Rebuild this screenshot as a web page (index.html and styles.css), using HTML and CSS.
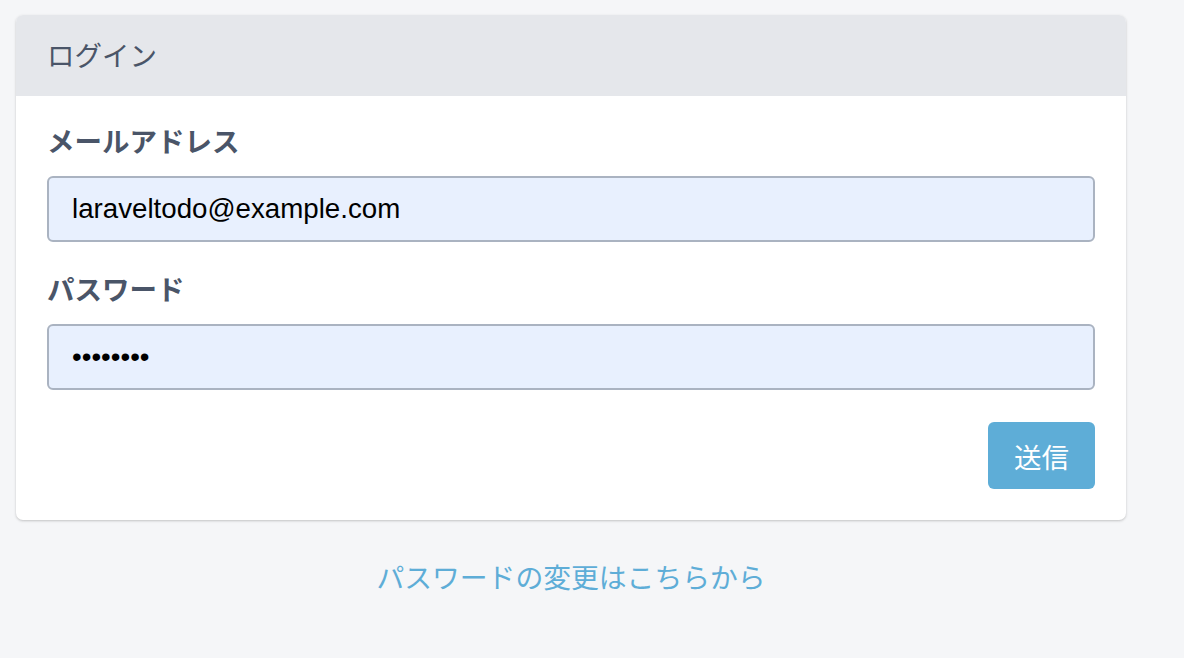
FILE: index.html
```html
<!DOCTYPE html>
<html lang="ja">
<head>
<meta charset="utf-8">
<title>ログイン</title>
<link rel="stylesheet" href="styles.css">
</head>
<body>
<main class="page">
  <section class="card">
    <header class="card-header">ログイン</header>
    <form class="card-body">
      <div class="field field-email">
        <label class="label" for="email">メールアドレス</label>
        <input class="input" id="email" type="text" value="laraveltodo@example.com">
      </div>
      <div class="field">
        <label class="label" for="password">パスワード</label>
        <input class="input" id="password" type="password" value="password">
      </div>
      <div class="actions">
        <button class="btn" type="button">送信</button>
      </div>
    </form>
  </section>
  <div class="link-row">
    <a class="link" href="#">パスワードの変更はこちらから</a>
  </div>
</main>
</body>
</html>
```

FILE: styles.css
```css
html, body {
  margin: 0;
  padding: 0;
}
body {
  background: #f5f6f8;
  font-family: "Liberation Sans", "Noto Sans CJK JP", sans-serif;
  color: #4a5568;
}
.page {
  padding: 15px 0 0 16px;
  width: 1110px;
}
.card {
  background: #ffffff;
  border-radius: 7px;
  box-shadow: 0 1px 3px rgba(0, 0, 0, 0.16), 0 1px 2px rgba(0, 0, 0, 0.06);
  overflow: hidden;
}
.card-header {
  box-sizing: border-box;
  background: #e5e7eb;
  height: 81px;
  display: flex;
  align-items: center;
  padding: 0 0 4px 31px;
  font-size: 27.5px;
  color: #4a5568;
}
.card-body {
  padding: 28px 31px 31px;
  margin: 0;
}
.field {
  display: flex;
  flex-direction: column;
  margin-bottom: 32px;
}
.field-email {
  margin-bottom: 30px;
}
.label {
  font-size: 27.5px;
  line-height: 38px;
  font-weight: bold;
  color: #4a5568;
  margin-bottom: 14px;
}
.input {
  box-sizing: border-box;
  height: 66px;
  width: 100%;
  border: 2px solid #aab3c1;
  border-radius: 6px;
  background: #e8f0fe;
  padding: 0 23px;
  font-family: "Liberation Sans", "Noto Sans CJK JP", sans-serif;
  font-size: 27.7px;
  color: #000000;
  outline: none;
}
.actions {
  display: flex;
  justify-content: flex-end;
}
.btn {
  width: 107px;
  height: 67px;
  border: none;
  border-radius: 6px;
  background: #5eadd7;
  color: #ffffff;
  font-family: "Liberation Sans", "Noto Sans CJK JP", sans-serif;
  font-size: 27.5px;
  padding: 0;
  cursor: pointer;
}
.link-row {
  margin-top: 40px;
  text-align: center;
}
.link {
  font-size: 27.8px;
  line-height: 38px;
  color: #5eadd7;
  text-decoration: none;
}
```
